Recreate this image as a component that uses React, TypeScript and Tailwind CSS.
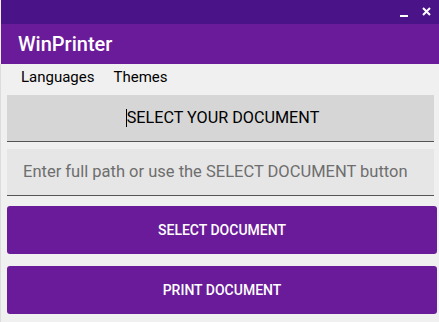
import React from "react";

export default function App() {
  return (
    <div className="w-[439px] h-[322px] bg-[#f0f0f0] flex flex-col overflow-hidden" style={{ fontFamily: "Roboto, 'Liberation Sans', sans-serif" }}>
      <div className="h-[24px] bg-[#4a1488] flex justify-end items-center pr-[8px] gap-[14px] shrink-0 ml-[1px]">
        <div className="w-[8px] h-[2px] bg-white mt-[8px]" />
        <svg width="9" height="9" viewBox="0 0 9 9" className="mb-[1px]">
          <path d="M1 1L8 8M8 1L1 8" stroke="white" strokeWidth="2" />
        </svg>
      </div>
      <div className="h-[40px] bg-[#6a1b9a] flex items-center pl-[17px] shrink-0 ml-[1px]">
        <span className="text-white text-[20px] font-medium leading-none">WinPrinter</span>
      </div>
      <div className="h-[26px] flex items-center gap-[19px] pl-[20px] text-[15px] text-black shrink-0 border-l border-[#dcdcdc]">
        <span>Languages</span>
        <span>Themes</span>
      </div>
      <div className="flex-1 border-l border-[#dcdcdc] pl-[6px] pr-[2px] pt-[5px] flex flex-col">
        <div className="w-[427px] h-[47px] bg-[#d6d6d6] border-b border-[#555] flex items-center justify-center pl-[4px] text-[16.2px] text-black">
          <span className="border-l border-black leading-[18px]">SELECT YOUR DOCUMENT</span>
        </div>
        <div className="w-[427px] h-[47px] mt-[7px] bg-[#e6e6e6] border-b border-[#555] flex items-center pl-[16px] text-[16.5px] text-[#6e6e6e]">
          Enter full path or use the SELECT DOCUMENT button
        </div>
        <button className="w-[430px] h-[48px] mt-[10px] bg-[#6a1b9a] rounded-[3px] text-white text-[14px] font-medium flex items-center justify-center">
          SELECT DOCUMENT
        </button>
        <button className="w-[430px] h-[48px] mt-[12px] bg-[#6a1b9a] rounded-[3px] text-white text-[14px] font-medium flex items-center justify-center">
          PRINT DOCUMENT
        </button>
      </div>
    </div>
  );
}
